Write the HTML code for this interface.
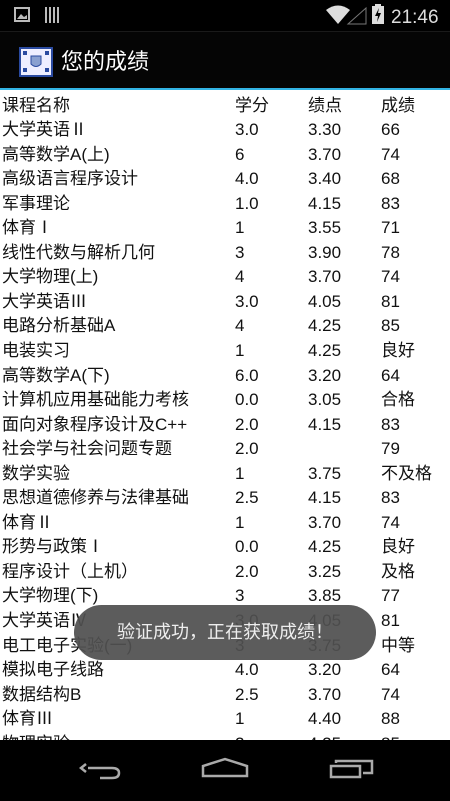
<!DOCTYPE html>
<html><head><meta charset="utf-8"><style>
*{margin:0;padding:0;box-sizing:border-box}
body{width:450px;height:801px;overflow:hidden;background:#fff;font-family:"Liberation Sans","Noto Sans CJK SC",sans-serif;position:relative}
.sb{position:absolute;top:0;left:0;width:450px;height:31px;background:#000}
.ab{position:absolute;top:31px;left:0;width:450px;height:57px;background:#050505;border-top:1px solid #1a1a1a}
.line{position:absolute;top:88px;left:0;width:450px;height:2px;background:#33b5e5}
.rows{position:absolute;top:93.5px;left:0;width:450px}
.r{height:24.56px;line-height:24.56px;font-size:17px;color:#111;position:relative;white-space:nowrap}
.r span{position:absolute;top:0}
.c1{left:2px}.c2{left:235px}.c3{left:308px}.c4{left:381px}
.nav{position:absolute;top:740px;left:0;width:450px;height:61px;background:#000}
.toast{position:absolute;left:74px;top:605px;width:302px;height:55px;border-radius:28px;background:rgba(80,80,80,0.93);color:#eee;font-size:18px;text-align:center;line-height:55px}
</style></head><body>
<div class="sb">
<svg width="450" height="31" style="position:absolute;left:0;top:0">
<rect x="15" y="8" width="14" height="13" fill="none" stroke="#bbb" stroke-width="2"/>
<path d="M17 19 L21 14 L24 17 L27 15 L27 19 Z" fill="#bbb"/>
<rect x="45" y="7" width="2" height="16" fill="#bbb"/><rect x="49" y="7" width="2" height="16" fill="#bbb"/><rect x="53" y="7" width="2" height="16" fill="#bbb"/><rect x="57" y="7" width="2" height="16" fill="#bbb"/>
<path d="M326 10 Q338 1 350 10 L338 24 Z" fill="#ddd"/>
<path d="M348 24 L366 8 L366 24 Z" fill="none" stroke="#777" stroke-width="1"/>
<rect x="372" y="6" width="12" height="18" fill="#ddd"/><rect x="375" y="4" width="6" height="3" fill="#ddd"/>
<path d="M379 8 L375 16 L378 16 L377 22 L381 13 L378 13 Z" fill="#000"/>
<text x="391" y="23" font-family="Liberation Sans" font-size="19" fill="#ddd">21:46</text>
</svg></div>
<div class="ab">
<svg width="34" height="30" style="position:absolute;left:19px;top:15px">
<rect x="1" y="1" width="32" height="28" fill="#eef" stroke="#2a4aa0" stroke-width="2"/>
<path d="M12 9 L22 9 L22 17 Q17 22 12 17 Z" fill="#8aa0d0" stroke="#2a4aa0"/>
<rect x="4" y="4" width="4" height="4" fill="#2a4aa0"/><rect x="26" y="4" width="4" height="4" fill="#2a4aa0"/><rect x="4" y="21" width="4" height="4" fill="#2a4aa0"/><rect x="26" y="21" width="4" height="4" fill="#2a4aa0"/>
</svg>
<div style="position:absolute;left:61px;top:16px;font-size:22px;color:#fff;line-height:28px">您的成绩</div>
</div>
<div class="line"></div>
<div class="rows">
<div class="r"><span class="c1">课程名称</span><span class="c2">学分</span><span class="c3">绩点</span><span class="c4">成绩</span></div>
<div class="r"><span class="c1">大学英语Ⅱ</span><span class="c2">3.0</span><span class="c3">3.30</span><span class="c4">66</span></div>
<div class="r"><span class="c1">高等数学A(上)</span><span class="c2">6</span><span class="c3">3.70</span><span class="c4">74</span></div>
<div class="r"><span class="c1">高级语言程序设计</span><span class="c2">4.0</span><span class="c3">3.40</span><span class="c4">68</span></div>
<div class="r"><span class="c1">军事理论</span><span class="c2">1.0</span><span class="c3">4.15</span><span class="c4">83</span></div>
<div class="r"><span class="c1">体育Ⅰ</span><span class="c2">1</span><span class="c3">3.55</span><span class="c4">71</span></div>
<div class="r"><span class="c1">线性代数与解析几何</span><span class="c2">3</span><span class="c3">3.90</span><span class="c4">78</span></div>
<div class="r"><span class="c1">大学物理(上)</span><span class="c2">4</span><span class="c3">3.70</span><span class="c4">74</span></div>
<div class="r"><span class="c1">大学英语Ⅲ</span><span class="c2">3.0</span><span class="c3">4.05</span><span class="c4">81</span></div>
<div class="r"><span class="c1">电路分析基础A</span><span class="c2">4</span><span class="c3">4.25</span><span class="c4">85</span></div>
<div class="r"><span class="c1">电装实习</span><span class="c2">1</span><span class="c3">4.25</span><span class="c4">良好</span></div>
<div class="r"><span class="c1">高等数学A(下)</span><span class="c2">6.0</span><span class="c3">3.20</span><span class="c4">64</span></div>
<div class="r"><span class="c1">计算机应用基础能力考核</span><span class="c2">0.0</span><span class="c3">3.05</span><span class="c4">合格</span></div>
<div class="r"><span class="c1">面向对象程序设计及C++</span><span class="c2">2.0</span><span class="c3">4.15</span><span class="c4">83</span></div>
<div class="r"><span class="c1">社会学与社会问题专题</span><span class="c2">2.0</span><span class="c3"></span><span class="c4">79</span></div>
<div class="r"><span class="c1">数学实验</span><span class="c2">1</span><span class="c3">3.75</span><span class="c4">不及格</span></div>
<div class="r"><span class="c1">思想道德修养与法律基础</span><span class="c2">2.5</span><span class="c3">4.15</span><span class="c4">83</span></div>
<div class="r"><span class="c1">体育Ⅱ</span><span class="c2">1</span><span class="c3">3.70</span><span class="c4">74</span></div>
<div class="r"><span class="c1">形势与政策Ⅰ</span><span class="c2">0.0</span><span class="c3">4.25</span><span class="c4">良好</span></div>
<div class="r"><span class="c1">程序设计（上机）</span><span class="c2">2.0</span><span class="c3">3.25</span><span class="c4">及格</span></div>
<div class="r"><span class="c1">大学物理(下)</span><span class="c2">3</span><span class="c3">3.85</span><span class="c4">77</span></div>
<div class="r"><span class="c1">大学英语Ⅳ</span><span class="c2">3.0</span><span class="c3">4.05</span><span class="c4">81</span></div>
<div class="r"><span class="c1">电工电子实验(一)</span><span class="c2">3</span><span class="c3">3.75</span><span class="c4">中等</span></div>
<div class="r"><span class="c1">模拟电子线路</span><span class="c2">4.0</span><span class="c3">3.20</span><span class="c4">64</span></div>
<div class="r"><span class="c1">数据结构B</span><span class="c2">2.5</span><span class="c3">3.70</span><span class="c4">74</span></div>
<div class="r"><span class="c1">体育Ⅲ</span><span class="c2">1</span><span class="c3">4.40</span><span class="c4">88</span></div>
<div class="r"><span class="c1">物理实验</span><span class="c2">2</span><span class="c3">4.25</span><span class="c4">85</span></div>
</div>
<div class="toast">验证成功，正在获取成绩！</div>
<div class="nav">
<svg width="450" height="61" style="position:absolute;left:0;top:0">
<g fill="none" stroke="#aaa" stroke-width="2.5">
<path d="M88 28 L112 28 Q119 28 119 33 Q119 38 112 38 L100 38"/>
<path d="M86 24 L81 28 L86 32"/>
<path d="M203 36 L203 26 L225 19 L247 26 L247 36 Z"/>
<path d="M331 26 L360 26 L360 37 L331 37 Z"/>
<path d="M336 23 L336 21 L372 21 L372 33 L363 33"/>
</g></svg></div>
</body></html>
